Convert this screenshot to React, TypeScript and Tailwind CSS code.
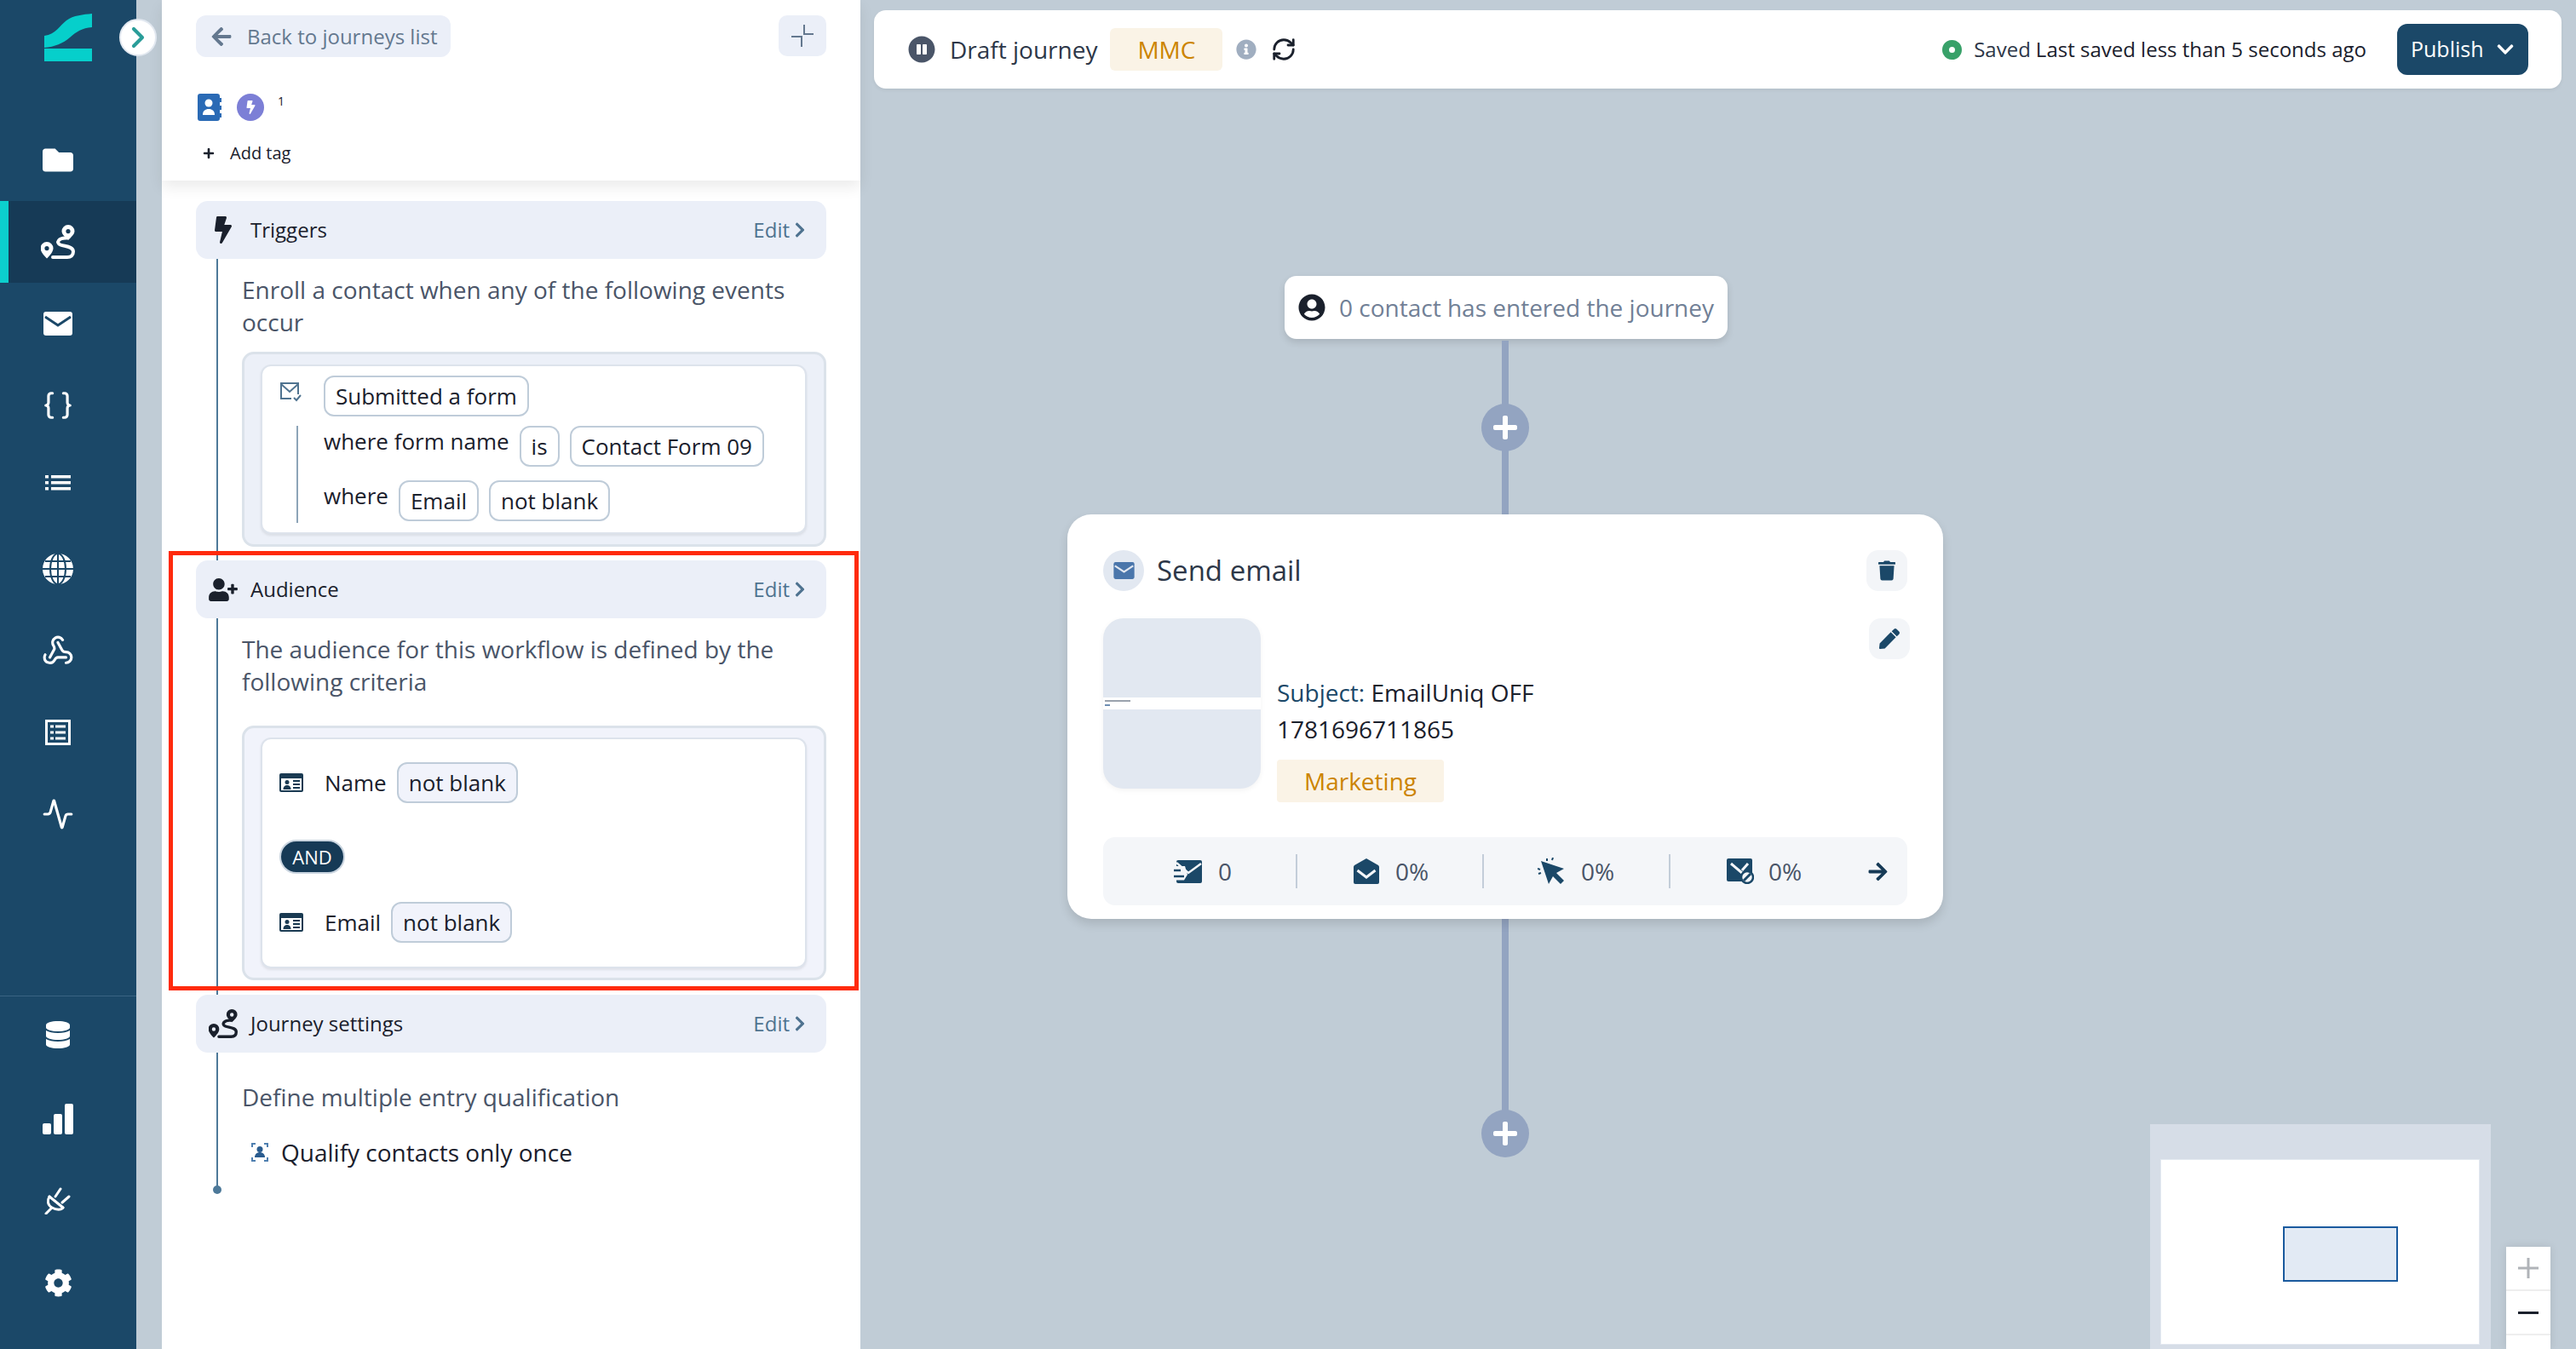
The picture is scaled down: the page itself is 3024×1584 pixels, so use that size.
import type { ReactNode } from 'react'
import { Activity, Braces, ChevronRight, RefreshCw, Webhook } from 'lucide-react'
import {
  FaArrowLeft,
  FaArrowRight,
  FaBolt,
  FaChevronDown,
  FaChevronRight,
  FaCog,
  FaDatabase,
  FaFolder,
  FaInfoCircle,
  FaPauseCircle,
  FaPen,
  FaPlus,
  FaTrash,
  FaUserCircle,
  FaUserPlus,
} from 'react-icons/fa'

function RouteIcon({ className }: { className?: string }) {
  return (
    <svg viewBox="0 0 40 40" className={className} fill="none">
      <path
        fillRule="evenodd"
        fill="currentColor"
        d="M7 20a7.500 7.500 0 0 0-7.500 7.500c0 4 4 8.500 7.500 12 3.500-3.500 7.500-8 7.500-12A7.500 7.500 0 0 0 7 20Zm0 5a2.600 2.600 0 1 1 0 5.200 2.600 2.600 0 0 1 0-5.200Z"
      />
      <path
        fillRule="evenodd"
        fill="currentColor"
        d="M32 0a7.500 7.500 0 0 0-7.500 7.500c0 3.500 4 7 7.500 10.500 3.500-3.500 7.500-7 7.500-10.500A7.500 7.500 0 0 0 32 0Zm0 5a2.600 2.600 0 1 1 0 5.200 2.600 2.600 0 0 1 0-5.200Z"
      />
      <path
        stroke="currentColor"
        strokeWidth="4"
        strokeLinecap="round"
        d="M30 15.500C21 15 17 21 23 23.500c5 2 15 1.500 15 8 0 4.500-3 6.500-7 6.500H14"
      />
    </svg>
  )
}

function Logo() {
  return (
    <svg viewBox="0 0 56 56" className="w-[56px] h-[56px]" fill="#06cfcb">
      <path d="M0 26C14 24 18 14 26 8 34 2 46 1 56 0v16C44 17 38 21 30 28 22 35 12 39 0 40Z" />
      <rect x="0" y="41" width="56" height="15" />
    </svg>
  )
}

function MailIcon({ className }: { className?: string }) {
  return (
    <svg viewBox="0 0 34 28" className={className}>
      <rect width="34" height="28" rx="3" fill="currentColor" />
      <path d="M2 6l15 10L32 6" fill="none" stroke="var(--notch)" strokeWidth="3" />
    </svg>
  )
}

function ListIcon() {
  return (
    <svg viewBox="0 0 30 18" className="w-[30px] h-[18px] -translate-y-[5px]" fill="#fff">
      <rect x="0" y="0" width="4" height="3.500" />
      <rect x="0" y="7" width="4" height="3.500" />
      <rect x="0" y="14" width="4" height="3.500" />
      <rect x="7" y="0" width="23" height="3.500" />
      <rect x="7" y="7" width="23" height="3.500" />
      <rect x="7" y="14" width="23" height="3.500" />
    </svg>
  )
}

function PlugIcon() {
  return (
    <svg viewBox="0 0 32 32" className="w-[32px] h-[32px]" fill="none" stroke="#fff" strokeWidth="3" strokeLinecap="round">
      <path d="M6 11l16 13" />
      <path d="M6 11c-3 5-2 10 3 13s11 3 13 0" />
      <path d="M13 11l6-9M21 18l8-7M8 25l-6 6" />
    </svg>
  )
}

function GlobeIcon() {
  return (
    <svg viewBox="0 0 36 36" className="w-[36px] h-[36px]" fill="none">
      <circle cx="18" cy="18" r="18" fill="#fff" />
      <ellipse cx="18" cy="18" rx="9" ry="18" stroke="#1b4868" strokeWidth="2" />
      <path d="M18 0v36M0 18h36M3 9h30M3 27h30" stroke="#1b4868" strokeWidth="2" />
    </svg>
  )
}

function FormListIcon() {
  return (
    <svg viewBox="0 0 30 30" className="w-[30px] h-[30px]" fill="none">
      <rect x="1.500" y="1.500" width="27" height="27" stroke="#fff" strokeWidth="3" />
      <path d="M6 8h4M12 8h12M6 15h4M12 15h12M6 22h4M12 22h12" stroke="#fff" strokeWidth="3" />
    </svg>
  )
}

function BarsIcon() {
  return (
    <svg viewBox="0 0 36 36" className="w-[36px] h-[36px]" fill="#fff">
      <rect x="0" y="23" width="10" height="13" rx="2" />
      <rect x="13" y="12" width="10" height="24" rx="2" />
      <rect x="26" y="0" width="10" height="36" rx="2" />
    </svg>
  )
}

function ContactCardIcon() {
  return (
    <svg viewBox="0 0 28 22" className="w-[28px] h-[22px] shrink-0">
      <rect width="28" height="22" rx="2" fill="#1a3a52" />
      <rect x="2" y="6" width="24" height="14" fill="#fff" />
      <circle cx="9" cy="10.500" r="2.500" fill="#1a3a52" />
      <path d="M4.500 19c0-3.500 2-5 4.500-5s4.500 1.500 4.500 5Z" fill="#1a3a52" />
      <path d="M16 9h8M16 13h8M16 17h8" stroke="#1a3a52" strokeWidth="2" />
    </svg>
  )
}

function SideItem({ children, active }: { children: ReactNode; active?: boolean }) {
  return (
    <div
      className={`h-[96px] shrink-0 w-full flex items-center justify-center text-white ${
        active ? 'bg-[#163a56] border-l-[10px] border-[#0ccfcd] pr-[34px]' : 'pr-[24px]'
      }`}
    >
      {children}
    </div>
  )
}

function Sidebar() {
  return (
    <div className="w-[160px] h-full bg-[#1b4868] flex flex-col shrink-0">
      <div className="h-[140px] shrink-0 pt-[16px] pl-[52px]">
        <Logo />
      </div>
      <SideItem>
        <FaFolder className="w-[40px] h-[36px]" />
      </SideItem>
      <SideItem active>
        <RouteIcon className="w-[40px] h-[40px]" />
      </SideItem>
      <SideItem>
        <div className="[--notch:#1b4868]">
          <MailIcon className="w-[34px] h-[28px]" />
        </div>
      </SideItem>
      <SideItem>
        <Braces className="w-[38px] h-[38px]" strokeWidth={2} />
      </SideItem>
      <SideItem>
        <ListIcon />
      </SideItem>
      <SideItem>
        <GlobeIcon />
      </SideItem>
      <SideItem>
        <Webhook className="w-[38px] h-[38px]" />
      </SideItem>
      <SideItem>
        <FormListIcon />
      </SideItem>
      <SideItem>
        <Activity className="w-[38px] h-[38px]" />
      </SideItem>
      <div className="flex-1 flex flex-col justify-end pb-[30px]">
        <div className="border-t border-[#3a6483]">
          <SideItem>
            <FaDatabase className="w-[30px] h-[32px] -translate-y-[3px]" />
          </SideItem>
          <SideItem>
            <BarsIcon />
          </SideItem>
          <SideItem>
            <PlugIcon />
          </SideItem>
          <SideItem>
            <FaCog className="w-[33px] h-[33px]" />
          </SideItem>
        </div>
      </div>
    </div>
  )
}

function SectionHeader({ icon, title }: { icon: ReactNode; title: string }) {
  return (
    <div className="relative h-[68px] rounded-[14px] bg-[#ebeff8] flex items-center pr-[24px]">
      <div className="w-[64px] flex justify-center text-[#1a202c]">{icon}</div>
      <span className="text-[24px] text-[#1a202c]">{title}</span>
      <span className="ml-auto flex items-center gap-[5px] text-[24px] text-[#4f7390]">
        Edit
        <FaChevronRight className="w-[14px] h-[20px]" />
      </span>
    </div>
  )
}

function Chip({ children, soft, strong }: { children: ReactNode; soft?: boolean; strong?: boolean }) {
  return (
    <span
      className={`h-[48px] px-[12px] inline-flex items-center rounded-[12px] border-2 border-[#bfccd9] text-[26px] text-[#1a202c] whitespace-nowrap ${
        soft ? 'bg-[#f1f3fb]' : 'bg-white'
      } ${strong ? 'font-medium' : ''}`}
    >
      {children}
    </span>
  )
}

function LeftPanel() {
  return (
    <div className="ml-[30px] w-[820px] h-full bg-white relative shrink-0 rounded-tl-[10px]">
      <div className="h-[212px] relative z-10 bg-white shadow-[0_8px_16px_rgba(0,0,0,0.08)] px-[40px] pt-[18px]">
        <div className="flex items-start justify-between">
          <div className="h-[49px] w-[299px] rounded-[12px] bg-[#ebeff8] flex items-center pl-[17px] text-[#64788f]">
            <FaArrowLeft className="w-[26px] h-[26px]" />
            <span className="ml-[17px] text-[24px]">Back to journeys list</span>
          </div>
          <div className="h-[48px] w-[56px] rounded-[10px] bg-[#ebeff8] flex items-center justify-center">
            <svg viewBox="0 0 28 28" className="w-[28px] h-[28px]" fill="none" stroke="#64788f" strokeWidth="2">
              <path d="M16 1v11h11M1 15h12v12" />
            </svg>
          </div>
        </div>
        <div className="mt-[43px] flex items-start h-[34px]">
          <svg viewBox="0 0 28 32" className="w-[28px] h-[32px] ml-[2px]">
            <rect width="26" height="32" rx="3" fill="#2a6ab5" />
            <rect x="26" y="5" width="2" height="5" fill="#2a6ab5" />
            <rect x="26" y="14" width="2" height="5" fill="#2a6ab5" />
            <rect x="26" y="23" width="2" height="5" fill="#2a6ab5" />
            <circle cx="13" cy="11" r="4.500" fill="#fff" />
            <path d="M6 25c0-5 3-7 7-7s7 2 7 7Z" fill="#fff" />
          </svg>
          <div className="ml-[18px] w-[32px] h-[32px] rounded-full bg-[#7c7fd6] flex items-center justify-center text-white">
            <FaBolt className="w-[13px] h-[16px]" />
          </div>
          <span className="ml-[16px] mt-[1px] text-[14px] leading-[16px] text-[#1a202c]">1</span>
        </div>
        <div className="mt-[21px] flex items-center text-[#1a202c]">
          <FaPlus className="ml-[8px] w-[14px] h-[14px]" />
          <span className="ml-[18px] text-[20px] font-medium">Add tag</span>
        </div>
      </div>

      <div className="absolute left-[64px] top-[304px] w-[2px] h-[1093px] bg-[#4d7999]" />
      <div className="absolute left-[60px] top-[1392px] w-[10px] h-[10px] rounded-full bg-[#4d7999]" />

      <div className="relative px-[40px] pt-[24px]">
        <SectionHeader icon={<FaBolt className="w-[22px] h-[32px]" />} title="Triggers" />
        <div className="pl-[54px]">
          <p className="mt-[17px] text-[28px] leading-[38px] text-[#4a5568]">
            Enroll a contact when any of the following events occur
          </p>
          <div className="mt-[16px] h-[229px] rounded-[14px] border-[3px] border-[#dbe2ea] bg-[#ecf0f8] pl-[19px] pr-[20px] pt-[12px]">
            <div className="h-[199px] bg-white rounded-[12px] border-2 border-[#dde3ec] shadow-[0_2px_3px_rgba(0,0,0,0.08)] pt-[11px] relative">
              <svg viewBox="0 0 26 24" className="absolute left-[21px] top-[19px] w-[26px] h-[24px]" fill="none" stroke="#4f7390" strokeWidth="2">
                <path d="M21 14V1H1v18h12M1 2l10 9 10-9M16 18l3 3 5-6" />
              </svg>
              <div className="pl-[72px]">
                <Chip>Submitted a form</Chip>
              </div>
              <div className="ml-[40px] mt-[11px] border-l-2 border-[#8da4b8] pl-[30px] h-[114px] flex flex-col gap-[16px]">
                <div className="flex items-start gap-[12px]">
                  <span className="text-[26px] leading-[36px] text-[#1a202c]">where form name</span>
                  <Chip>is</Chip>
                  <Chip strong>Contact Form 09</Chip>
                </div>
                <div className="flex items-start gap-[12px]">
                  <span className="text-[26px] leading-[36px] text-[#1a202c]">where</span>
                  <Chip>Email</Chip>
                  <Chip>not blank</Chip>
                </div>
              </div>
            </div>
          </div>
        </div>

        <div className="mt-[16px]">
          <SectionHeader icon={<FaUserPlus className="w-[34px] h-[27px]" />} title="Audience" />
        </div>
        <div className="pl-[54px]">
          <p className="mt-[17px] text-[28px] leading-[38px] text-[#4a5568]">
            The audience for this workflow is defined by the following criteria
          </p>
          <div className="mt-[33px] h-[299px] rounded-[14px] border-[3px] border-[#dbe2ea] bg-[#f1f3fb] pl-[19px] pr-[20px] pt-[11px]">
            <div className="h-[271px] bg-white rounded-[12px] border-2 border-[#dde3ec] shadow-[0_2px_3px_rgba(0,0,0,0.08)] pl-[20px] pt-[26px]">
              <div className="flex items-center h-[50px]">
                <ContactCardIcon />
                <span className="ml-[25px] mr-[12px] text-[26px] text-[#1a202c]">Name</span>
                <Chip soft>not blank</Chip>
              </div>
              <div className="mt-[42px] h-[40px] w-[77px] rounded-full bg-[#163a56] border-2 border-[#c9d4df] flex items-center justify-center text-[22px] text-white">
                AND
              </div>
              <div className="mt-[32px] flex items-center h-[50px]">
                <ContactCardIcon />
                <span className="ml-[25px] mr-[12px] text-[26px] text-[#1a202c]">Email</span>
                <Chip soft>not blank</Chip>
              </div>
            </div>
          </div>
        </div>

        <div className="mt-[17px]">
          <SectionHeader icon={<RouteIcon className="w-[34px] h-[34px]" />} title="Journey settings" />
        </div>
        <div className="pl-[54px]">
          <p className="mt-[33px] text-[28px] leading-[38px] text-[#4a5568]">Define multiple entry qualification</p>
          <div className="mt-[27px] flex items-center h-[38px]">
            <svg viewBox="0 0 22 24" className="ml-[10px] w-[22px] h-[24px]" fill="none">
              <path d="M6 2H2v4M16 2h4v4M6 22H2v-4M16 22h4v-4" stroke="#4f7fb0" strokeWidth="2" />
              <circle cx="11" cy="8.500" r="3.500" fill="#2a5c8f" />
              <path d="M5 18c0-4 3-6 6-6s6 2 6 6Z" fill="#2a5c8f" />
            </svg>
            <span className="ml-[14px] text-[28px] text-[#1a202c]">Qualify contacts only once</span>
          </div>
        </div>
      </div>

      <div className="absolute left-[8px] top-[647px] w-[810px] h-[516px] border-[5px] border-[#ff2a0c] z-20" />
    </div>
  )
}

function TopBar() {
  return (
    <div className="absolute left-[16px] top-[12px] w-[1981px] h-[92px] bg-white rounded-[14px] shadow-[0_2px_4px_rgba(0,0,0,0.06)] flex items-center pl-[40px] pr-[39px]">
      <FaPauseCircle className="w-[32px] h-[32px] text-[#4a5568]" />
      <span className="ml-[17px] text-[28px] text-[#2d3748]">Draft journey</span>
      <div className="ml-[15px] w-[132px] h-[50px] rounded-[6px] bg-[#faf3e6] flex items-center justify-center text-[28px] text-[#cc8400]">
        MMC
      </div>
      <FaInfoCircle className="ml-[16px] w-[24px] h-[24px] text-[#a0aec0]" />
      <RefreshCw className="ml-[17px] w-[30px] h-[30px] text-[#1a202c]" strokeWidth={2.25} />
      <div className="ml-auto flex items-center">
        <span className="w-[23px] h-[23px] rounded-full border-[8px] border-[#38a169] bg-white" />
        <span className="ml-[14px] text-[24px] text-[#2d3748]">Saved</span>
        <span className="ml-[6px] text-[24px] font-medium text-[#1a202c]">Last saved less than 5 seconds ago</span>
      </div>
      <div className="ml-[36px] w-[154px] h-[60px] rounded-[12px] bg-[#1b4868] text-white flex items-center pl-[16px]">
        <span className="text-[25px]">Publish</span>
        <FaChevronDown className="ml-[13px] w-[24px] h-[22px]" />
      </div>
    </div>
  )
}

function PlusDot({ top }: { top: number }) {
  return (
    <div
      className="absolute left-[729px] w-[56px] h-[56px] rounded-full bg-[#93a4c1] flex items-center justify-center text-white"
      style={{ top }}
    >
      <FaPlus className="w-[32px] h-[32px]" />
    </div>
  )
}

function Stat({ icon, value, width }: { icon: ReactNode; value: string; width: string }) {
  return (
    <div className={`flex items-center h-[40px] ${width}`}>
      {icon}
      <span className="ml-[19px] text-[28px] text-[#4a5568]">{value}</span>
    </div>
  )
}

function EmailNode() {
  return (
    <div className="absolute left-[243px] top-[604px] w-[1028px] h-[475px] rounded-[28px] bg-white shadow-[0_6px_12px_rgba(0,0,0,0.12)] pt-[42px] px-[42px]">
      <div className="flex items-center justify-between h-[48px]">
        <div className="flex items-center">
          <div className="w-[48px] h-[48px] rounded-full bg-[#e2e8f1] flex items-center justify-center text-[#4a76ab] [--notch:#e2e8f1]">
            <MailIcon className="w-[25px] h-[20px]" />
          </div>
          <span className="ml-[15px] text-[33px] text-[#2d3748]">Send email</span>
        </div>
        <div className="w-[48px] h-[48px] rounded-[14px] bg-[#f3f5f8] flex items-center justify-center text-[#1b4868]">
          <FaTrash className="w-[20px] h-[24px]" />
        </div>
      </div>
      <div className="relative mt-[32px] flex">
        <div className="w-[185px] h-[200px] rounded-[24px] bg-[#e2e8f1] shadow-[0_2px_6px_rgba(0,0,0,0.05)] overflow-hidden pt-[93px]">
          <div className="h-[14px] bg-white pl-[2px] pt-[3px]">
            <div className="w-[30px] h-[2px] bg-[#9aa2ad]" />
            <div className="mt-[3px] w-[6px] h-[2px] bg-[#6f8fb3]" />
          </div>
        </div>
        <div className="ml-[19px] pt-[68px]">
          <div className="text-[28px] leading-[38px] text-[#1a202c]">
            <span className="font-medium text-[#1b4868]">Subject:</span> EmailUniq OFF
          </div>
          <div className="mt-[5px] text-[28px] leading-[38px] text-[#1a202c]">1781696711865</div>
          <div className="mt-[17px] w-[196px] h-[50px] rounded-[4px] bg-[#faf3e6] flex items-center justify-center text-[28px] text-[#cc8400]">
            Marketing
          </div>
        </div>
        <div className="absolute right-[-3px] top-0 w-[48px] h-[48px] rounded-[14px] bg-[#f3f5f8] flex items-center justify-center text-[#1b4868]">
          <FaPen className="w-[24px] h-[24px]" />
        </div>
      </div>
      <div className="mt-[41px] h-[80px] rounded-[14px] bg-[#f4f6f9] flex items-center pl-[83px] text-[#1b4868]">
        <Stat
          width="w-[143px]"
          value="0"
          icon={
            <svg viewBox="0 0 33 27" className="w-[33px] h-[27px] shrink-0">
              <rect x="3" y="0" width="30" height="27" rx="2" fill="currentColor" />
              <path d="M0 7h13l3 10-4 6.500H0Z" fill="#f4f6f9" />
              <path d="M3 3l14 12L32 4" fill="none" stroke="#f4f6f9" strokeWidth="2.500" />
              <path d="M0 12h8M0 19h12" stroke="currentColor" strokeWidth="2.500" />
            </svg>
          }
        />
        <div className="w-[2px] h-[40px] bg-[#c3cdd9] mr-[66px]" />
        <Stat
          width="w-[151px]"
          value="0%"
          icon={
            <svg viewBox="0 0 30 30" className="w-[30px] h-[30px] shrink-0">
              <path d="M15 0 29 8q1 1 1 2v18q0 2-2 2H2q-2 0-2-2V10q0-1 1-2Z" fill="currentColor" />
              <path d="M4.500 14 15 22l10.500-8" fill="none" stroke="#f4f6f9" strokeWidth="3" />
            </svg>
          }
        />
        <div className="w-[2px] h-[40px] bg-[#c3cdd9] mr-[63px]" />
        <Stat
          width="w-[154px]"
          value="0%"
          icon={
            <svg viewBox="0 0 32 32" className="w-[32px] h-[32px] shrink-0">
              <path d="M4 4 31 13l-9 5 9 9-4 4-9-9-5 9Z" fill="currentColor" />
              <path d="M0 13l3 1M1 19l3-1M11 1v3M18 0l-1 3" stroke="currentColor" strokeWidth="2" fill="none" />
            </svg>
          }
        />
        <div className="w-[2px] h-[40px] bg-[#c3cdd9] mr-[66px]" />
        <Stat
          width="w-[165px]"
          value="0%"
          icon={
            <svg viewBox="0 0 32 30" className="w-[32px] h-[30px] shrink-0 -mr-[2px]">
              <rect x="0" y="0" width="30" height="27" rx="2" fill="currentColor" />
              <path d="M5 6l13 11M25 6l-7 8" fill="none" stroke="#f4f6f9" strokeWidth="3" />
              <circle cx="24" cy="22" r="7" fill="#f4f6f9" stroke="currentColor" strokeWidth="2.500" />
              <path d="M20 26l8-8" stroke="currentColor" strokeWidth="3" />
            </svg>
          }
        />
        <FaArrowRight className="w-[25px] h-[25px] text-[#163a56]" />
      </div>
    </div>
  )
}

function Canvas() {
  return (
    <div className="relative flex-1 h-full bg-[#c0ccd6] overflow-hidden">
      <TopBar />
      <div className="absolute left-[498px] top-[324px] w-[520px] h-[74px] rounded-[14px] bg-white shadow-[0_4px_8px_rgba(0,0,0,0.12)] flex items-center pl-[16px]">
        <FaUserCircle className="w-[32px] h-[32px] text-[#1a202c]" />
        <span className="ml-[16px] text-[28px] text-[#718096] whitespace-nowrap">0 contact has entered the journey</span>
      </div>
      <div className="absolute left-[753px] top-[400px] w-[8px] h-[204px] bg-[#93a4c1]" />
      <PlusDot top={474} />
      <div className="absolute left-[753px] top-[1079px] w-[8px] h-[240px] bg-[#93a4c1]" />
      <PlusDot top={1303} />
      <EmailNode />
      <div className="absolute left-[1514px] top-[1320px] w-[400px] h-[264px] bg-[#d6dde7] pl-[12px] pt-[41px]">
        <div className="relative w-[375px] h-[218px] bg-white border border-[#e2e8f0]">
          <div className="absolute left-[143px] top-[78px] w-[135px] h-[65px] bg-[#e2eaf4] border-2 border-[#1a5a9e]" />
        </div>
      </div>
      <div className="absolute left-[1932px] top-[1464px] w-[52px] h-[120px] bg-white shadow-[0_0_10px_rgba(0,0,0,0.1)] flex flex-col">
        <div className="h-[52px] shrink-0 flex items-center justify-center border-b-2 border-[#eeeeee]">
          <svg viewBox="0 0 24 24" className="w-[24px] h-[24px]" stroke="#b0b3b8" strokeWidth="3">
            <path d="M12 0v24M0 12h24" />
          </svg>
        </div>
        <div className="h-[52px] shrink-0 flex items-center justify-center border-b-2 border-[#eeeeee]">
          <div className="w-[24px] h-[3px] bg-[#1a202c]" />
        </div>
      </div>
    </div>
  )
}

export default function App() {
  return (
    <div className="relative flex w-[3024px] h-[1584px] overflow-hidden bg-[#c0ccd6] font-['Open_Sans',sans-serif]">
      <Sidebar />
      <LeftPanel />
      <Canvas />
      <div className="absolute left-[140px] top-[22px] w-[44px] h-[44px] rounded-full bg-white border-2 border-[#e2e8f0] flex items-center justify-center text-[#2a9d99] z-30">
        <ChevronRight className="w-[40px] h-[40px]" strokeWidth={2.5} />
      </div>
    </div>
  )
}
